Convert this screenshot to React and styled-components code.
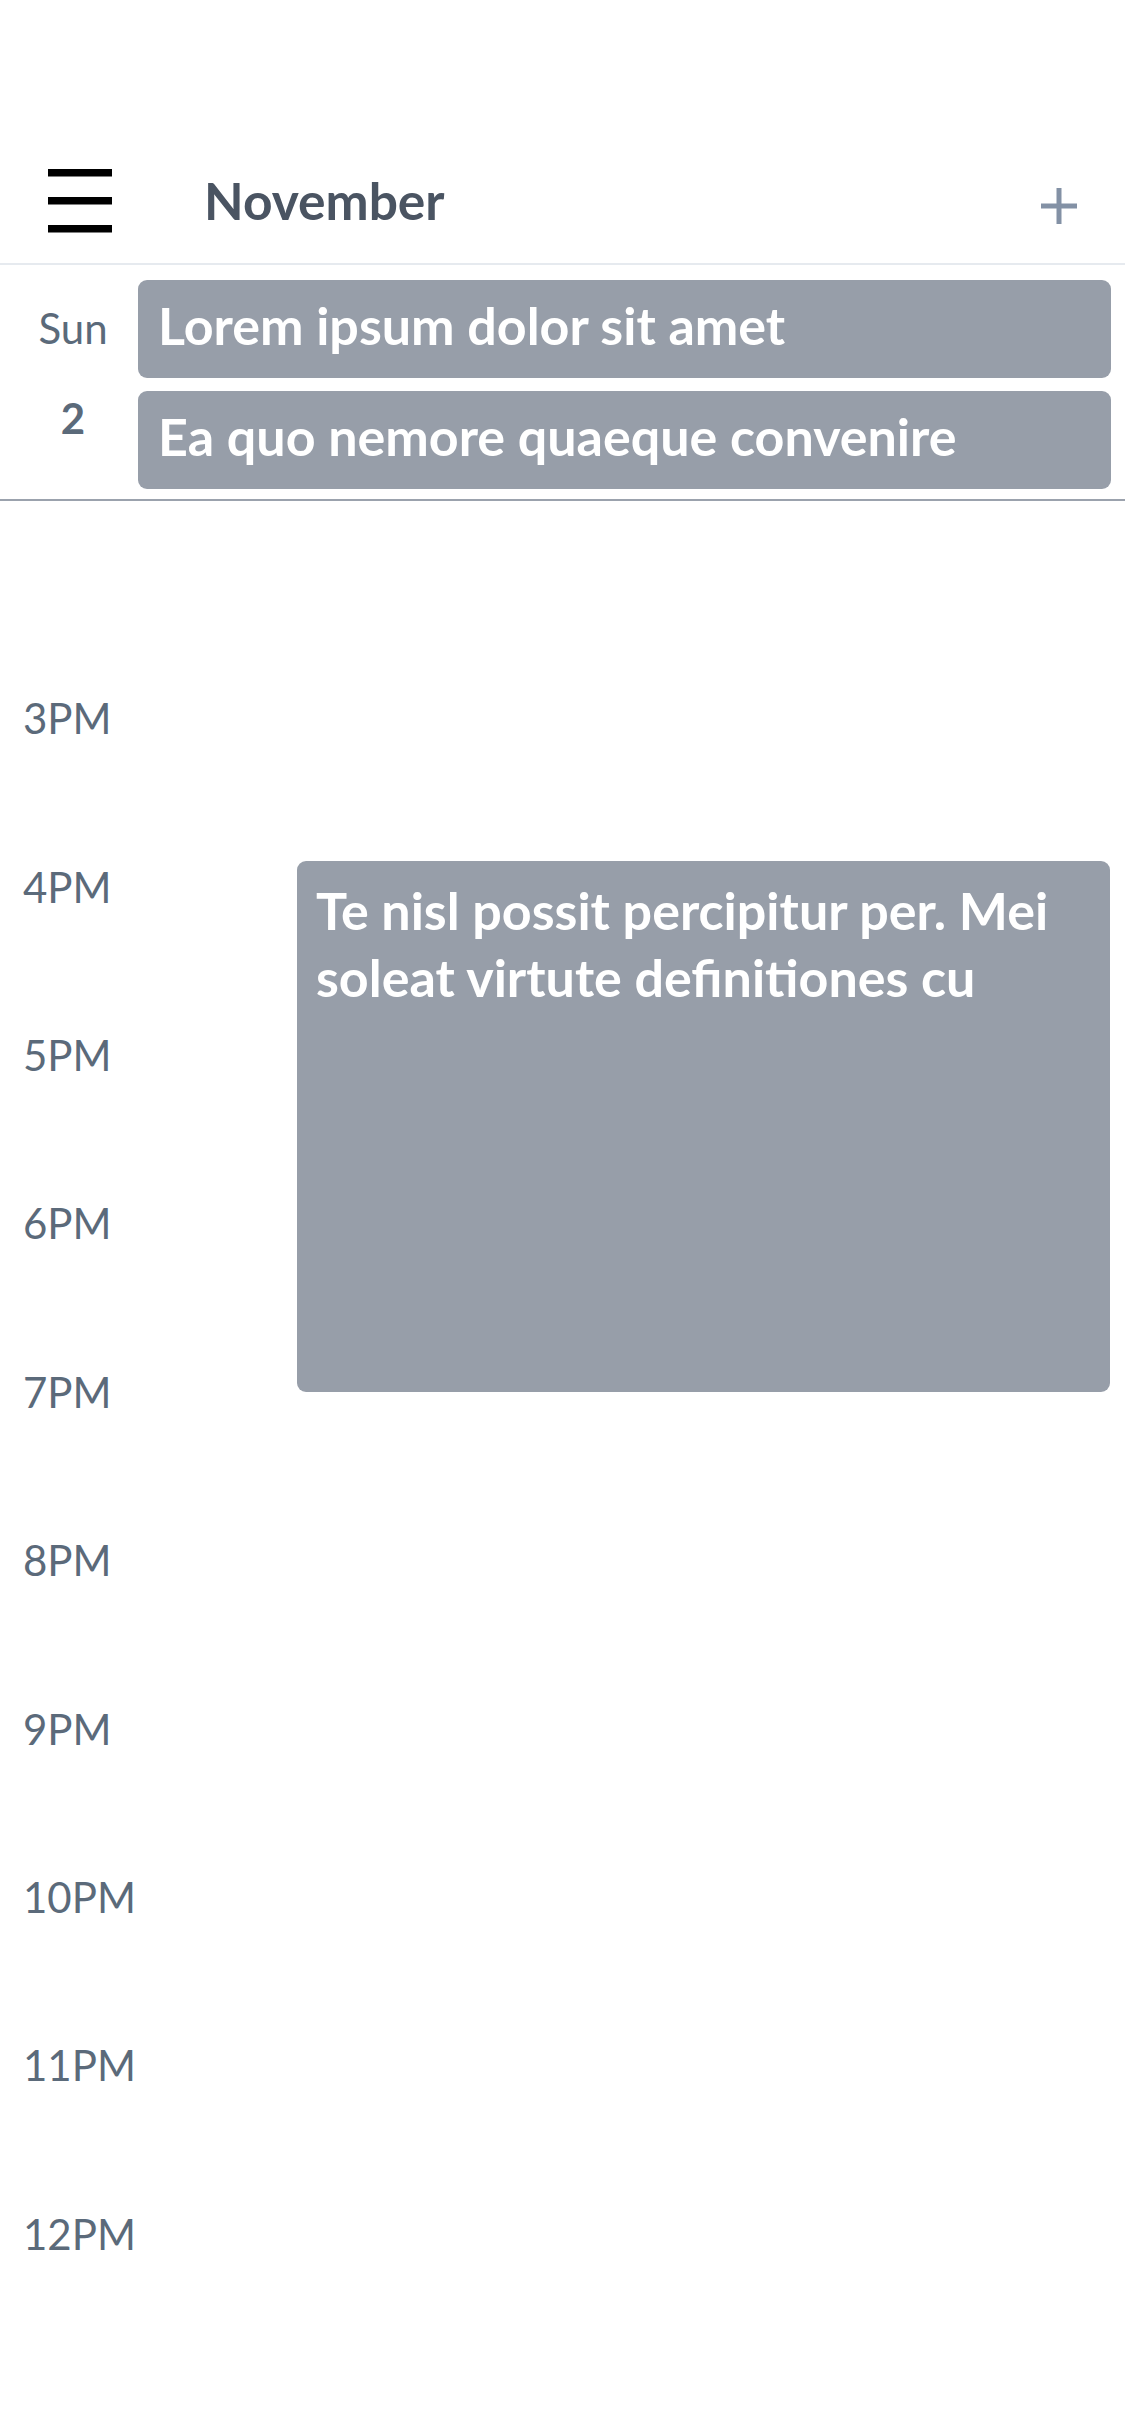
import React from "react";
import styled, { createGlobalStyle } from "styled-components";

const HOUR_HEIGHT = 168.4;
const FIRST_HOUR = 15;
const GRID_TOP = 133;

const GlobalStyle = createGlobalStyle`
  html, body {
    margin: 0;
    padding: 0;
    background: #ffffff;
  }
  body {
    font-family: Lato, "Open Sans", "Liberation Sans", sans-serif;
    -webkit-font-smoothing: antialiased;
  }
  * { box-sizing: border-box; }
`;

const Screen = styled.div`
  width: 1125px;
  height: 2436px;
  overflow: hidden;
  background: #ffffff;
  display: flex;
  flex-direction: column;
  padding-top: 140px;
`;

const Header = styled.header`
  flex-shrink: 0;
  height: 125px;
  display: flex;
  align-items: center;
  padding: 0 48px 2px 48px;
  border-bottom: 2px solid #e6eaef;
`;

const MenuButton = styled.button`
  border: 0;
  background: none;
  padding: 0;
  width: 64px;
  height: 64px;
  display: flex;
  align-items: center;
  justify-content: center;
  cursor: pointer;
`;

const Title = styled.h1`
  flex: 1;
  margin: 0 0 0 92px;
  font-size: 51.5px;
  font-weight: 700;
  line-height: 1;
  color: #4a5462;
`;

const AddButton = styled.button`
  border: 0;
  background: none;
  padding: 0;
  margin-top: 10px;
  width: 36px;
  height: 36px;
  display: flex;
  cursor: pointer;
`;

const DayRow = styled.section`
  flex-shrink: 0;
  display: grid;
  grid-template-columns: 138px 1fr;
  padding: 15px 14px 10px 0;
  border-bottom: 2px solid #9ba2ad;
`;

const DayLabel = styled.div`
  display: flex;
  flex-direction: column;
  align-items: center;
  padding: 27px 0 0 8px;
  color: #5b6a7a;
  line-height: 1;
`;

const DayName = styled.span`
  font-size: 42px;
  font-weight: 400;
`;

const DayNumber = styled.span`
  margin-top: 48px;
  font-size: 42px;
  font-weight: 700;
`;

const EventList = styled.div`
  display: flex;
  flex-direction: column;
  gap: 13px;
`;

const AllDayEvent = styled.div`
  height: 98px;
  display: flex;
  align-items: center;
  padding: 0 20px 8px 20px;
  border-radius: 9px;
  background: #979ea9;
  color: #ffffff;
  font-size: 52px;
  font-weight: 700;
  white-space: nowrap;
  overflow: hidden;
`;

const Timeline = styled.section`
  position: relative;
  flex: 1;
  padding-top: ${GRID_TOP}px;
`;

const HourRow = styled.div`
  height: ${HOUR_HEIGHT}px;
  display: flex;
  align-items: center;
  padding-left: 23px;
  font-size: 42px;
  line-height: 1;
  color: #5b6a7a;
`;

const TimedEvent = styled.div`
  position: absolute;
  left: 297px;
  right: 15px;
  padding: 16px 20px 15px 19px;
  border-radius: 9px;
  background: #979ea9;
  color: #ffffff;
  font-size: 52px;
  font-weight: 700;
  line-height: 67px;
`;

const MenuIcon = () => (
  <svg width="64" height="64" viewBox="0 0 64 64" aria-hidden="true">
    <rect x="0" y="0" width="64" height="7.5" fill="#000" />
    <rect x="0" y="28" width="64" height="7.5" fill="#000" />
    <rect x="0" y="56" width="64" height="7.5" fill="#000" />
  </svg>
);

const PlusIcon = () => (
  <svg width="36" height="36" viewBox="0 0 36 36" aria-hidden="true">
    <rect x="15.5" y="0" width="5" height="36" fill="#8391a5" />
    <rect x="0" y="15.5" width="36" height="5" fill="#8391a5" />
  </svg>
);

const hours = ["3PM", "4PM", "5PM", "6PM", "7PM", "8PM", "9PM", "10PM", "11PM", "12PM"];

const allDay = ["Lorem ipsum dolor sit amet", "Ea quo nemore quaeque convenire"];

const timed = {
  title: "Te nisl possit percipitur per. Mei soleat virtute definitiones cu",
  start: 15.85,
  end: 19,
};

const hourCenter = (h) => GRID_TOP + HOUR_HEIGHT / 2 + (h - FIRST_HOUR) * HOUR_HEIGHT;

export default function App() {
  const top = hourCenter(timed.start);
  const height = hourCenter(timed.end) - top;
  return (
    <>
      <GlobalStyle />
      <Screen>
        <Header>
          <MenuButton aria-label="Menu">
            <MenuIcon />
          </MenuButton>
          <Title>November</Title>
          <AddButton aria-label="Add event">
            <PlusIcon />
          </AddButton>
        </Header>
        <DayRow>
          <DayLabel>
            <DayName>Sun</DayName>
            <DayNumber>2</DayNumber>
          </DayLabel>
          <EventList>
            {allDay.map((t) => (
              <AllDayEvent key={t}>{t}</AllDayEvent>
            ))}
          </EventList>
        </DayRow>
        <Timeline>
          {hours.map((h) => (
            <HourRow key={h}>{h}</HourRow>
          ))}
          <TimedEvent style={{ top: `${top}px`, height: `${height}px` }}>
            {timed.title}
          </TimedEvent>
        </Timeline>
      </Screen>
    </>
  );
}
